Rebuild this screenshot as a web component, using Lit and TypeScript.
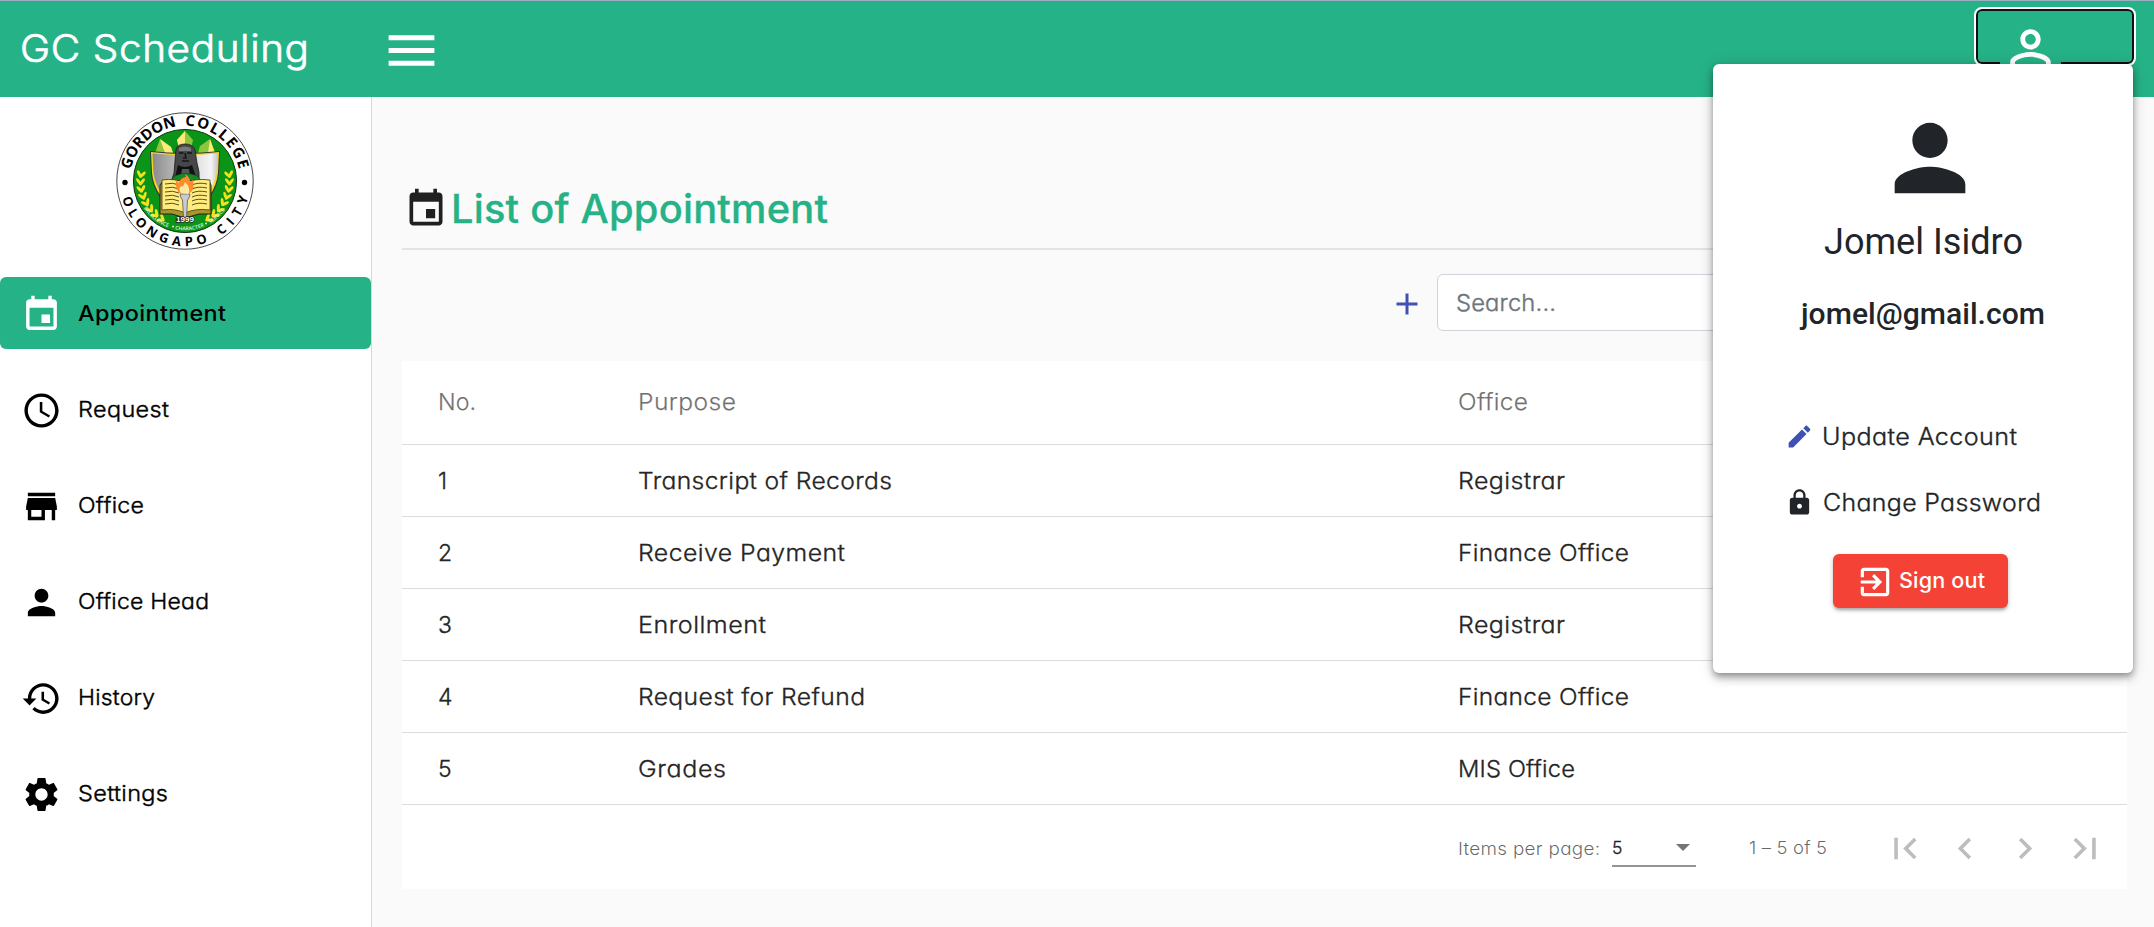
import { LitElement, html, css, svg } from "lit";
import { customElement, property } from "lit/decorators.js";
import { classMap } from "lit/directives/class-map.js";

const ICONS: Record<string, string> = {
  menu: "M3 18h18v-2H3v2zm0-5h18v-2H3v2zm0-7v2h18V6H3z",
  event:
    "M17 12h-5v5h5v-5zM16 1v2H8V1H6v2H5c-1.11 0-1.99.9-1.99 2L3 19c0 1.1.89 2 2 2h14c1.1 0 2-.9 2-2V5c0-1.1-.9-2-2-2h-1V1h-2zm3 18H5V8h14v11z",
  schedule:
    "M11.99 2C6.47 2 2 6.48 2 12s4.47 10 9.99 10C17.52 22 22 17.52 22 12S17.52 2 11.99 2zM12 20c-4.42 0-8-3.58-8-8s3.58-8 8-8 8 3.58 8 8-3.58 8-8 8zM12.5 7H11v6l5.25 3.15.75-1.23-4.5-2.67z",
  store: "M20 4H4v2h16V4zm1 10v-2l-1-5H4l-1 5v2h1v6h10v-6h4v6h2v-6h1zm-9 4H6v-4h6v4z",
  person:
    "M12 12c2.21 0 4-1.79 4-4s-1.79-4-4-4-4 1.79-4 4 1.79 4 4 4zm0 2c-2.67 0-8 1.34-8 4v2h16v-2c0-2.66-5.33-4-8-4z",
  personOutline:
    "M12 5.9c1.16 0 2.1.94 2.1 2.1s-.94 2.1-2.1 2.1S9.900 9.160 9.900 8s.94-2.100 2.100-2.100m0 9c2.970 0 6.100 1.460 6.100 2.100v1.100H5.900V17c0-.64 3.130-2.100 6.100-2.100M12 4C9.790 4 8 5.790 8 8s1.790 4 4 4 4-1.790 4-4-1.790-4-4-4zm0 9c-2.670 0-8 1.340-8 4v3h16v-3c0-2.660-5.330-4-8-4z",
  history:
    "M13 3c-4.97 0-9 4.030-9 9H1l3.890 3.890.070.140L9 12H6c0-3.870 3.130-7 7-7s7 3.130 7 7-3.130 7-7 7c-1.930 0-3.680-.79-4.940-2.060l-1.420 1.420C8.270 19.990 10.510 21 13 21c4.970 0 9-4.030 9-9s-4.030-9-9-9zm-1 5v5l4.280 2.540.720-1.210-3.500-2.080V8H12z",
  settings:
    "M19.140 12.940c.04-.3.06-.61.06-.94 0-.32-.02-.64-.07-.94l2.030-1.580c.18-.14.23-.41.12-.61l-1.920-3.320c-.12-.22-.37-.29-.59-.22l-2.390.96c-.5-.38-1.030-.7-1.620-.94l-.36-2.540c-.04-.24-.24-.41-.48-.41h-3.840c-.24 0-.43.17-.47.41l-.36 2.540c-.59.24-1.130.57-1.620.94l-2.390-.96c-.22-.08-.47 0-.59.22L2.740 8.870c-.12.21-.08.47.12.61l2.030 1.580c-.05.3-.09.63-.09.94s.02.64.07.94l-2.030 1.580c-.18.14-.23.41-.12.61l1.920 3.320c.12.22.37.29.59.22l2.390-.96c.5.38 1.030.7 1.620.94l.36 2.540c.05.24.24.41.48.41h3.840c.24 0 .44-.17.47-.41l.36-2.540c.59-.24 1.130-.56 1.620-.94l2.390.96c.22.08.47 0 .59-.22l1.920-3.320c.12-.22.07-.47-.12-.61l-2.010-1.580zM12 15.600c-1.980 0-3.600-1.620-3.600-3.600s1.620-3.600 3.600-3.600 3.600 1.620 3.600 3.600-1.620 3.600-3.600 3.600z",
  add: "M19 13h-6v6h-2v-6H5v-2h6V5h2v6h6v2z",
  edit: "M3 17.250V21h3.750L17.810 9.940l-3.750-3.750L3 17.250zM20.710 7.040c.39-.39.39-1.020 0-1.410l-2.340-2.340c-.39-.39-1.020-.39-1.410 0l-1.830 1.830 3.750 3.750 1.830-1.830z",
  lock: "M18 8h-1V6c0-2.760-2.240-5-5-5S7 3.240 7 6v2H6c-1.100 0-2 .9-2 2v10c0 1.100.9 2 2 2h12c1.100 0 2-.9 2-2V10c0-1.100-.9-2-2-2zm-6 9c-1.100 0-2-.9-2-2s.9-2 2-2 2 .9 2 2-.9 2-2 2zm3.100-9H8.900V6c0-1.710 1.390-3.100 3.100-3.100 1.710 0 3.100 1.390 3.100 3.100v2z",
  exit: "M10.090 15.590L11.500 17l5-5-5-5-1.410 1.410L12.670 11H3v2h9.670l-2.580 2.590zM19 3H5c-1.110 0-2 .9-2 2v4h2V5h14v14H5v-4H3v4c0 1.100.89 2 2 2h14c1.100 0 2-.9 2-2V5c0-1.100-.9-2-2-2z",
  first: "M18.410 16.590L13.820 12l4.590-4.590L17 6l-6 6 6 6zM6 6h2v12H6z",
  prev: "M15.410 7.410L14 6l-6 6 6 6 1.410-1.410L10.830 12z",
  next: "M10 6L8.590 7.410 13.170 12l-4.580 4.590L10 18l6-6z",
  last: "M5.590 7.410L10.180 12l-4.590 4.590L7 18l6-6-6-6zM16 6h2v12h-2z",
};

const icon = (name: string, cls: string) =>
  html`<svg class=${cls} viewBox="0 0 24 24" fill="currentColor"><path d=${ICONS[name]}></path></svg>`;

/** One line of text, widened and tracked so that it fills the given width. */
@customElement("fit-text")
export class FitText extends LitElement {
  @property() text = "";
  @property({ type: Number }) width = 0;

  static styles = css`
    :host {
      display: inline-block;
      flex: none;
    }
    .line {
      display: inline-block;
      white-space: pre;
      transform-origin: 0 50%;
    }
  `;

  updated() {
    const line = this.renderRoot.querySelector<HTMLElement>(".line")!;
    const fit = () => {
      this.style.width = `${this.width}px`;
      line.style.letterSpacing = "0";
      line.style.transform = "none";
      const natural = line.getBoundingClientRect().width;
      const ratio = this.width / natural;
      const stretch = this.text.length > 1 ? 1 + (ratio - 1) * 0.7 : 1;
      const gap = (this.width / stretch - natural) / Math.max(1, this.text.length - 1);
      line.style.letterSpacing = `${gap}px`;
      line.style.transform = `scaleX(${stretch})`;
    };
    fit();
    document.fonts.ready.then(fit);
  }

  render() {
    return html`<span class="line">${this.text}</span>`;
  }
}

const fit = (text: string, width: number) => html`<fit-text .text=${text} .width=${width}></fit-text>`;

const LEAVES = [0, 1, 2, 3, 4, 5, 6, 7];

@customElement("college-seal")
export class CollegeSeal extends LitElement {
  static styles = css`
    :host {
      display: block;
      width: 138px;
      height: 138px;
    }
    svg {
      display: block;
      width: 100%;
      height: 100%;
      overflow: visible;
    }
    .ring {
      font: 700 15px "Open Sans", sans-serif;
    }
    .city {
      font: 700 13px "Open Sans", sans-serif;
    }
    .motto {
      font: 600 5.200px "Open Sans", sans-serif;
      fill: #e2f5da;
    }
    .year {
      font: 700 8px "Liberation Sans", sans-serif;
      fill: #fff;
      stroke: #222;
      stroke-width: 1.600px;
      paint-order: stroke;
    }
  `;

  private wreath() {
    return LEAVES.map((i) => {
      const a = ((190 - i * 9.500) * Math.PI) / 180;
      const x = 44.500 * Math.cos(a);
      const y = 44.500 * Math.sin(a);
      const deg = 10 - i * 9.500;
      return svg`<g transform="translate(${x} ${y}) rotate(${deg})">
        <ellipse cx="-2" cy="0" rx="1.500" ry="4.100" transform="rotate(-35)"></ellipse>
        <ellipse cx="2" cy="0" rx="1.500" ry="4.100" transform="rotate(35)"></ellipse>
      </g>`;
    });
  }

  render() {
    return html`
      <svg viewBox="-69 -69 138 138">
        <defs>
          <path id="top" d="M -55.300 0 A 55.300 55.300 0 0 1 55.300 0"></path>
          <path id="bottom" d="M -65.200 0 A 65.200 65.200 0 0 0 65.200 0"></path>
          <path id="inner" d="M -49.300 0 A 49.300 49.300 0 0 0 49.300 0"></path>
          <linearGradient id="metal">
            <stop offset="0" stop-color="#8b8b8b"></stop>
            <stop offset=".6" stop-color="#d9d9d9"></stop>
            <stop offset=".9" stop-color="#f4f4f4"></stop>
            <stop offset="1" stop-color="#c8c8c8"></stop>
          </linearGradient>
        </defs>
        <circle r="68.200" fill="#fff" stroke="#333" stroke-width=".9"></circle>
        <circle r="51.600" fill="#0b9518" stroke="#123a12" stroke-width="1"></circle>

        <path d="M-8 -41 L0 -50 L8 -41 L5 -28 L-5 -28Z" fill="#8cc63f"></path>
        <path d="M0 -50 L-8 -41 L-5 -30 L0 -38Z" fill="#ffe97a"></path>
        <path d="M-25 -42 L-14 -34 L-12 -28 L-30 -28Z" fill="#8cc63f"></path>
        <path d="M-25 -42 L-14 -34 L-12 -28 L-20 -28Z" fill="#ffe97a"></path>
        <path d="M25 -42 L15 -35 L13 -28 L30 -28Z" fill="#8cc63f"></path>
        <path d="M25 -42 L23 -28 L30 -28Z" fill="#ffe97a"></path>

        <path d="M-35 -30 Q0 -26 35 -30 L34 -8 Q32 18 0 40 Q-32 18 -34 -8Z" fill="#333"></path>
        <path d="M-34 -29 Q0 -25 34 -29 L33 -8 Q31 17 0 38 Q-31 17 -33 -8Z" fill="#f5d523"></path>
        <path d="M-32.500 -27.500 Q0 -24 32.500 -27.500 L31.500 -8 Q28 16 0 36 Q-28 16 -31.500 -8Z" fill="url(#metal)"></path>

        <g fill="#f7e11b">${this.wreath()}</g>
        <g fill="#f7e11b" transform="scale(-1 1)">${this.wreath()}</g>

        <path
          d="M-9 -32 Q-7 -37 0 -37 Q8 -37 10 -31 L12 -18 Q15 -8 14 -2 L16 1 H-14 L-11 -8 Z"
          fill="#454749"
          stroke="#1c1c1c"
          stroke-width=".8"
        ></path>
        <path d="M-6 -33 Q0 -36 6 -33 L6 -30 L-6 -30Z" fill="#77797b"></path>
        <path d="M-6 -28 H-1.500 M2 -28 H7 M0 -28 L1 -23 H-2 M-3 -20 H4" stroke="#161616" stroke-width="1.500" fill="none"></path>
        <path d="M-7 -16 Q0 -12 7 -16 L11 -4 H-10Z" fill="#111"></path>
        <path d="M-3 -12 H4 L5 -5 H-4Z" fill="#55585a"></path>
        <ellipse cx="1" cy="-1" rx="14" ry="6.500" fill="#138a25" stroke="#1c3a1c" stroke-width=".6"></ellipse>

        <path d="M-25 4 L-22 0 H24 L26 4 V33 L14 33 L0 37 L-13 33 H-25Z" fill="#a8962a" stroke="#222" stroke-width="1"></path>
        <path d="M-23 -1 Q-10 -3 0 2 Q10 -3 25 -1 V29 Q10 27 0 32 Q-10 27 -23 29Z" fill="#ffeb80" stroke="#403a10" stroke-width=".8"></path>
        <g stroke="#55501c" stroke-width="1" fill="none">
          ${[3, 7, 11, 15, 19, 23].map(
            (y) => svg`<path d="M-20 ${y} Q-12 ${y - 2} -6 ${y + 1} M7 ${y + 1} Q13 ${y - 2} 22 ${y}"></path>`
          )}
        </g>
        <path d="M-5 13 H5 L4 17 L2.500 19 L1.500 37 H-1.500 L-2.500 19 L-4 17Z" fill="#c9cbd0" stroke="#4a4a4a" stroke-width=".7"></path>
        <path d="M-6 12 Q-10 7 -9 -1 L-6 2 Q-5 -3 1 -4 L0 -7 Q5 -4 5 1 L8 -1 Q10 8 5 12Z" fill="#ff8b2c"></path>
        <path d="M-4 12 Q-7 8 -4 5 Q-2 7 0 1 Q4 5 4 8 Q5 11 3 13Z" fill="#ffe9a0"></path>

        <text class="year" x="0" y="41" text-anchor="middle">1999</text>
        <text class="ring" textLength="67"><textPath href="#top" startOffset="6.500%">GORDON</textPath></text>
        <text class="ring" textLength="75"><textPath href="#top" startOffset="50%">COLLEGE</textPath></text>
        <text class="city" textLength="108"><textPath href="#bottom" startOffset="8.500%">OLONGAPO</textPath></text>
        <text class="city" textLength="48"><textPath href="#bottom" startOffset="68.500%">CITY</textPath></text>
        <text class="motto"><textPath href="#inner" startOffset="18.500%">EXCELLENCE</textPath></text>
        <text class="motto"><textPath href="#inner" startOffset="43.500%">CHARACTER</textPath></text>
        <text class="motto"><textPath href="#inner" startOffset="67%">SERVICE</textPath></text>
        <circle cx="-12" cy="45.500" r="1" fill="#d8f0cf"></circle>
        <circle cx="21" cy="42.500" r="1" fill="#d8f0cf"></circle>
        <circle cx="-60" cy="1.500" r="2.700"></circle>
        <circle cx="59.500" cy="1.500" r="2.700"></circle>
      </svg>
    `;
  }
}

const NAV = [
  { icon: "event", label: "Appointment", width: 148, active: true },
  { icon: "schedule", label: "Request", width: 91 },
  { icon: "store", label: "Office", width: 66 },
  { icon: "person", label: "Office Head", width: 131 },
  { icon: "history", label: "History", width: 77 },
  { icon: "settings", label: "Settings", width: 90 },
];

const ROWS: [string, number, string, number, string, number][] = [
  ["1", 9, "Transcript of Records", 254, "Registrar", 107],
  ["2", 14, "Receive Payment", 207, "Finance Office", 171],
  ["3", 14, "Enrollment", 128, "Registrar", 107],
  ["4", 15, "Request for Refund", 227, "Finance Office", 171],
  ["5", 14, "Grades", 88, "MIS Office", 117],
];

@customElement("app-root")
export class AppRoot extends LitElement {
  static styles = css`
    :host {
      display: flex;
      flex-direction: column;
      box-sizing: border-box;
      height: 927px;
      overflow: hidden;
      position: relative;
      background: #fafafa;
      border-top: 1px solid #9bb0c4;
      font-family: Inter, "Open Sans", sans-serif;
      font-feature-settings: "cv11";
      font-weight: 300;
      color: rgba(0, 0, 0, 0.87);
    }
    * {
      box-sizing: border-box;
    }
    svg {
      display: block;
      flex: none;
    }
    .bar {
      flex: none;
      height: 96px;
      display: flex;
      align-items: center;
      background: #26b287;
      color: #fff;
      padding: 0 18px 0 20px;
    }
    .brand {
      width: 361px;
      font-size: 38px;
      line-height: 94px;
      padding-bottom: 2px;
      -webkit-text-stroke: 0.7px currentColor;
    }
    .menu {
      width: 61px;
      height: 61px;
      margin-top: 2px;
    }
    .account {
      margin: 6px 0 0 auto;
      align-self: flex-start;
      width: 162px;
      height: 59px;
      padding: 10px 0 0 24px;
      border: 2px solid #fff;
      border-radius: 8px;
      box-shadow: inset 0 0 0 2px #101010;
      background: #26b287;
    }
    .account-icon {
      width: 61px;
      height: 61px;
      background: #26b287;
    }
    .body {
      flex: 1;
      display: flex;
      min-height: 0;
    }
    .side {
      width: 372px;
      background: #fff;
      border-right: 1px solid #d8d8d8;
      color: #000;
    }
    .seal {
      margin: 15px 0 27px 115.500px;
    }
    .nav {
      display: flex;
      flex-direction: column;
      gap: 24px;
    }
    .item {
      height: 72px;
      display: flex;
      align-items: center;
      gap: 16px;
      padding-left: 21px;
      border-radius: 6px;
      font-size: 22px;
      -webkit-text-stroke: 0.4px currentColor;
    }
    .item.active {
      background: #26b287;
      font-weight: 500;
      -webkit-text-stroke: 0;
    }
    .item-icon {
      width: 41px;
      height: 41px;
      margin-top: 3px;
    }
    .active .item-icon {
      color: #fff;
    }
    .main {
      flex: 1;
      padding: 85px 27px 0 30px;
    }
    .heading {
      display: flex;
      align-items: center;
      gap: 3px;
      height: 68px;
      padding: 0 0 14px 2px;
      border-bottom: 2px solid #e3e3e3;
      color: #26b287;
      font-size: 39px;
      font-weight: 500;
    }
    .heading fit-text {
      -webkit-text-stroke: 0.3px currentColor;
    }
    .heading-icon {
      width: 44px;
      height: 44px;
      margin-top: 2px;
      color: #202020;
    }
    .tools {
      display: flex;
      justify-content: flex-end;
      align-items: center;
      gap: 12px;
      padding: 24px 0 30px;
    }
    .add {
      width: 36px;
      height: 36px;
      margin-top: 2px;
      color: #3f51b5;
    }
    .search {
      width: 690px;
      height: 57px;
      display: flex;
      align-items: center;
      padding-left: 18px;
      background: #fff;
      border: 1px solid #ced4da;
      border-radius: 6px;
      color: #6c757d;
      font-size: 23px;
      -webkit-text-stroke: 0.4px currentColor;
    }
    .card {
      background: #fff;
    }
    .row {
      display: grid;
      grid-template-columns: 200px 820px 1fr;
      align-items: center;
      height: 72px;
      padding-left: 36px;
      border-bottom: 1px solid #dcdcdc;
      font-size: 23px;
      -webkit-text-stroke: 0.35px #212121;
    }
    .head {
      height: 84px;
      padding-bottom: 2px;
      color: rgba(0, 0, 0, 0.57);
      -webkit-text-stroke: 0.25px #777;
    }
    .pager {
      display: flex;
      align-items: center;
      height: 84px;
      padding: 2px 12px 0 1056px;
      color: rgba(0, 0, 0, 0.6);
      font-size: 17.500px;
    }
    .select {
      width: 84px;
      height: 38px;
      margin: 0 53px 0 12px;
      display: flex;
      align-items: center;
      justify-content: space-between;
      border-bottom: 2px solid #949494;
      padding-right: 6px;
      color: #222;
      -webkit-text-stroke: 0.3px currentColor;
    }
    .caret {
      border: 7.500px solid transparent;
      border-top-color: #757575;
      border-bottom-width: 0;
    }
    .range {
      width: 126px;
      padding-bottom: 2px;
    }
    .page {
      width: 60px;
      height: 43px;
      color: #bdbdbd;
    }
    .panel {
      position: absolute;
      top: 63px;
      right: 21px;
      width: 420px;
      height: 609px;
      padding-top: 41px;
      display: flex;
      flex-direction: column;
      background: #fff;
      border-radius: 6px;
      box-shadow: 0 3px 6px -1.500px rgba(0, 0, 0, 0.3), 0 6px 8px rgba(0, 0, 0, 0.16), 0 1.500px 15px rgba(0, 0, 0, 0.16);
      color: #212529;
    }
    .avatar {
      width: 106px;
      height: 106px;
      margin-left: 163.500px;
    }
    .name {
      margin: 7px 0 0 111px;
      font: 400 36px/48px Roboto, sans-serif;
    }
    .email {
      margin: 28px 0 0 88px;
      font: 500 30px/40px Roboto, sans-serif;
    }
    .link {
      display: flex;
      align-items: center;
      height: 40px;
      gap: 8px;
      padding-left: 72px;
      font-size: 23.500px;
      -webkit-text-stroke: 0.35px currentColor;
    }
    .update {
      margin-top: 82px;
    }
    .change {
      margin-top: 26px;
      gap: 9px;
    }
    .link-icon {
      width: 29px;
      height: 29px;
    }
    .edit {
      color: #3f51b5;
    }
    .signout {
      width: 175px;
      height: 54px;
      margin: 32px 0 0 120px;
      display: flex;
      align-items: center;
      gap: 5px;
      padding: 0 0 2px 23px;
      border-radius: 6px;
      background: #f44336;
      box-shadow: 0 3px 3px -1px rgba(0, 0, 0, 0.2), 0 2px 5px rgba(0, 0, 0, 0.22);
      color: #fff;
      font-size: 21px;
      font-weight: 500;
    }
    .exit {
      width: 38px;
      height: 38px;
      margin-top: 4px;
    }
  `;

  render() {
    return html`
      <header class="bar">
        <div class="brand">${fit("GC Scheduling", 289)}</div>
        ${icon("menu", "menu")}
        <div class="account">${icon("personOutline", "account-icon")}</div>
      </header>
      <div class="body">
        <aside class="side">
          <college-seal class="seal"></college-seal>
          <nav class="nav">
            ${NAV.map(
              (n) => html`<div class=${classMap({ item: true, active: !!n.active })}>
                ${icon(n.icon, "item-icon")}${fit(n.label, n.width)}
              </div>`
            )}
          </nav>
        </aside>
        <main class="main">
          <div class="heading">${icon("event", "heading-icon")}${fit("List of Appointment", 377)}</div>
          <div class="tools">
            ${icon("add", "add")}
            <div class="search">${fit("Search...", 100)}</div>
          </div>
          <section class="card">
            <div class="row head">${fit("No.", 38)}${fit("Purpose", 98)}${fit("Office", 70)}</div>
            ${ROWS.map(
              (r) => html`<div class="row">${fit(r[0], r[1])}${fit(r[2], r[3])}${fit(r[4], r[5])}</div>`
            )}
            <div class="pager">
              ${fit("Items per page:", 142)}
              <div class="select">${fit("5", 11)}<i class="caret"></i></div>
              <div class="range">${fit("1 – 5 of 5", 78)}</div>
              ${icon("first", "page")}${icon("prev", "page")}${icon("next", "page")}${icon("last", "page")}
            </div>
          </section>
        </main>
      </div>
      <div class="panel">
        ${icon("person", "avatar")}
        <div class="name">${fit("Jomel Isidro", 199)}</div>
        <div class="email">${fit("jomel@gmail.com", 244)}</div>
        <div class="link update">${icon("edit", "link-icon edit")}${fit("Update Account", 195)}</div>
        <div class="link change">${icon("lock", "link-icon")}${fit("Change Password", 218)}</div>
        <div class="signout">${icon("exit", "exit")}${fit("Sign out", 86)}</div>
      </div>
    `;
  }
}
